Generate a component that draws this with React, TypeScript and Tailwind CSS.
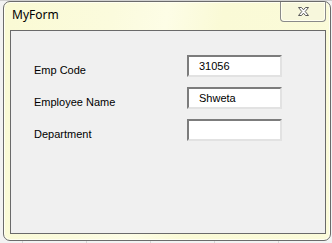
import React from "react";

function CloseGlyph() {
  return (
    <svg width="13" height="11" viewBox="0 0 13 11">
      <path
        d="M1.5 1.5 L4.5 1.5 L6.5 3.8 L8.5 1.5 L11.5 1.5 L8.2 5.5 L11.5 9.5 L8.5 9.5 L6.5 7.2 L4.5 9.5 L1.5 9.5 L4.8 5.5 Z"
        fill="#ffffff"
        stroke="#5a5a5a"
        strokeWidth="1"
        strokeLinejoin="round"
      />
    </svg>
  );
}

function Field({ label, value }: { label: string; value: string }) {
  return (
    <div className="flex items-start">
      <div className="w-[153px] pt-[9px] text-[11px] leading-[13px] text-black">{label}</div>
      <div className="h-[22px] w-[95px] border-2 border-t-[#7c7c7c] border-l-[#7c7c7c] border-b-[#e2e2e2] border-r-[#e2e2e2] bg-white pl-[10px] pt-[3px] text-[11px] leading-[13px] text-black">
        {value}
      </div>
    </div>
  );
}

export default function App() {
  return (
    <div
      className="h-[243px] w-[332px] overflow-hidden border-t border-[#d0d0d0] bg-[#f2f2f2] bg-[repeating-linear-gradient(90deg,transparent_0,transparent_22px,#d6d6d6_22px,#d6d6d6_23px,transparent_23px,transparent_64px)] pl-[3px] pt-0 pr-px pb-[2px]"
      style={{ fontFamily: "'Liberation Sans', Arial, sans-serif" }}
    >
      <div className="flex h-full flex-col rounded-[7px] border border-[#6b6b6b] bg-[#fafad9] bg-[linear-gradient(100deg,#fafad4_0%,#fbfbdd_30%,#fdfde6_45%,#fafad6_60%,#fbfbda_100%)] shadow-[inset_0_0_0_1px_#fffff2]">
        <div className="flex h-[28px] items-start">
          <div
            className="pl-[8px] pt-[5px] text-[12px] leading-[16px] text-black"
            style={{ fontFamily: "'Noto Sans', 'Open Sans', sans-serif" }}
          >
            MyForm
          </div>
          <div className="ml-auto mr-[4px] flex h-[20px] w-[46px] items-center justify-center rounded-b-[4px] border border-t-0 border-[#8a8a8a] bg-[#f7f7dc] shadow-[inset_0_0_0_1px_#fffff0]">
            <CloseGlyph />
          </div>
        </div>
        <div className="mb-[6px] ml-[6px] mr-[4px] flex flex-1 flex-col gap-[10px] border border-[#6a6a6a] bg-[#f0f0f0] pl-[23px] pt-[24px]">
          <Field label="Emp Code" value="31056" />
          <Field label="Employee Name" value="Shweta" />
          <Field label="Department" value="" />
        </div>
      </div>
    </div>
  );
}
